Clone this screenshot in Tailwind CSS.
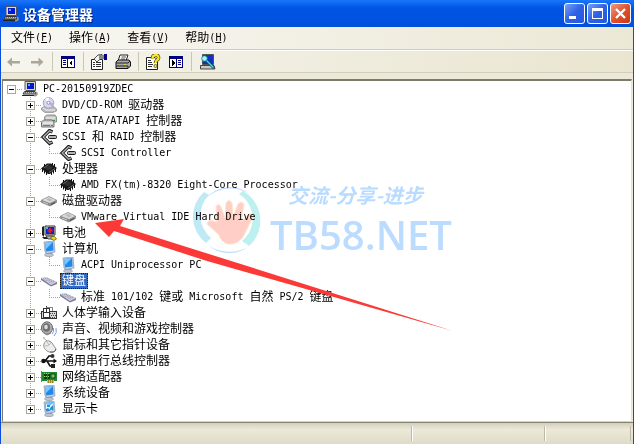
<!DOCTYPE html>
<html lang="zh-CN">
<head>
<meta charset="utf-8">
<title>设备管理器</title>
<script src="https://cdn.jsdelivr.net/npm/@tailwindcss/browser@4"></script>
</head>
<body class="bg-[#ece9d8]">
<svg class="hidden" aria-hidden="true">
  <symbol id="box-plus" viewBox="0 0 19 16" shape-rendering="crispEdges">
    <path d="M8.5 0V16M10 8.5H19" stroke="#a0a0a0" stroke-dasharray="1 1" fill="none"/>
    <rect x="4.500" y="4.500" width="8" height="8" fill="#fff" stroke="#aca899"/>
    <path d="M6 8.500H11M8.500 6V11" stroke="#000"/>
  </symbol>
  <symbol id="box-minus" viewBox="0 0 19 16" shape-rendering="crispEdges">
    <path d="M8.500 0V16M10 8.500H19" stroke="#a0a0a0" stroke-dasharray="1 1" fill="none"/>
    <rect x="4.500" y="4.500" width="8" height="8" fill="#fff" stroke="#aca899"/>
    <path d="M6 8.500H11" stroke="#000"/>
  </symbol>
  <symbol id="box-root" viewBox="0 0 19 16" shape-rendering="crispEdges">
    <path d="M14 8.500H19" stroke="#a0a0a0" stroke-dasharray="1 1" fill="none"/>
    <rect x="4.500" y="4.500" width="8" height="8" fill="#fff" stroke="#aca899"/>
    <path d="M6 8.500H11" stroke="#000"/>
  </symbol>
  <symbol id="box-last" viewBox="0 0 19 16" shape-rendering="crispEdges">
    <path d="M8.500 0V8M14 8.500H19" stroke="#a0a0a0" stroke-dasharray="1 1" fill="none"/>
    <rect x="4.500" y="4.500" width="8" height="8" fill="#fff" stroke="#aca899"/>
    <path d="M6 8.500H11M8.500 6V11" stroke="#000"/>
  </symbol>
  <symbol id="line" viewBox="0 0 19 16" shape-rendering="crispEdges">
    <path d="M8.500 0V16" stroke="#a0a0a0" stroke-dasharray="1 1"/>
  </symbol>
  <symbol id="corner" viewBox="0 0 19 16" shape-rendering="crispEdges">
    <path d="M8.500 0V8M8 8.500H19" stroke="#a0a0a0" stroke-dasharray="1 1" fill="none"/>
  </symbol>

  <symbol id="pc" viewBox="0 0 16 16">
    <path d="M3 .500H13.500V9.500H4L3 8.500Z" fill="#dcdad0" stroke="#555" stroke-width="1"/>
    <rect x="5" y="2" width="7" height="6" fill="#0018d8"/><path d="M6 3H8V5H6Z" fill="#5aa0ff"/>
    <path d="M2.500 10.500H13L14 13H1Z" fill="#c8c8c8" stroke="#333"/><path d="M3 11.500H13" stroke="#666" stroke-dasharray="1 1"/>
    <path d="M0 14.500H12" stroke="#222"/><path d="M12 14.500C15 15 16 13 14 11" stroke="#999" stroke-width="1.600" fill="none"/>
  </symbol>
  <symbol id="cd" viewBox="0 0 16 16">
    <path d="M.500 11L4 9H12L15.500 12V14L12 15.500H4L.500 13Z" fill="#b9b9bd" stroke="#8a8a90" stroke-width=".7"/>
    <path d="M2 11L5 13H14" stroke="#f3f3f3" fill="none"/>
    <circle cx="7.500" cy="5.800" r="5.300" fill="#d9d9ee" stroke="#9494ac" stroke-width=".8"/>
    <path d="M7.500 5.800L4 2A5 5 0 0 1 8 .800Z" fill="#fff"/><path d="M7.500 5.800L11 10A5 5 0 0 0 12.500 6Z" fill="#b6aee6"/>
    <circle cx="7.500" cy="5.800" r="1.500" fill="#fff" stroke="#7c7cc0" stroke-width=".8"/>
  </symbol>
  <symbol id="ide" viewBox="0 0 16 16">
    <path d="M3.500 4L5.500 2H14L15.500 4V9H4Z" fill="#c4c4c4" stroke="#777" stroke-width=".8"/><path d="M5 5H14" stroke="#f6f6f6"/>
    <path d="M.500 9L2.500 7H11L13 9V14H.500Z" fill="#c8c8c8" stroke="#6a6a6a" stroke-width=".9"/><path d="M2 10H12" stroke="#fff"/><path d="M2 12.500H9" stroke="#777"/><path d="M10 12H12V13H10ZM12 7H14V8H12Z" fill="#18b020"/>
  </symbol>
  <symbol id="scsi" viewBox="0 0 16 16">
    <path d="M11.500 3L8.500 1.500L2 8L8.500 14.500L11.500 13" fill="none" stroke="#1a1a1a" stroke-width="3.200"/>
    <path d="M11 2.800L8.500 1.700L2.200 8L8.500 14.300L11 13.200" fill="none" stroke="#b4b4b4" stroke-width="1.300"/>
    <rect x="7.500" y="6.500" width="8" height="3" rx="1" fill="#b4b4b4" stroke="#1a1a1a"/>
  </symbol>
  <symbol id="cpu" viewBox="0 0 16 16">
    <path d="M0 7.500L6 2.500H10L16 7L9 13H7Z" fill="#1a1a1a"/>
    <path d="M1.500 7V11M3.500 9V12.500M5.500 10V14M10.500 10V14M12.500 9V12.500M14.500 7V11M3.500 3V6M11.500 2V4M13.500 3V6" stroke="#111" stroke-width="1"/>
    <path d="M4 7L8 4L12 6.500L8 9.500Z" fill="#303030"/><path d="M3 7L7.500 3.700M8 11.500L14 7.500" stroke="#8a8a8a" stroke-width=".7"/>
  </symbol>
  <symbol id="disk" viewBox="0 0 16 16">
    <path d="M.500 7L8 3.500L15.500 7V9.500L9 13L.500 9.500Z" fill="#8c8c8c" stroke="#777" stroke-width=".6"/>
    <path d="M1 7L8 4L15 7L9 10Z" fill="#dedede"/><path d="M5 6.500L8 5L12 7L9 8.500Z" fill="#bcbcbc"/><path d="M10 11.500L14 9.500" stroke="#444"/><path d="M2 9L7 11" stroke="#ccc"/>
  </symbol>
  <symbol id="battery" viewBox="0 0 16 16">
    <path d="M1 2L3 1V12L1 10ZM1 12H10V14H3Z" fill="#222"/>
    <path d="M4 1H14V10H4Z" fill="#d8d8d8" stroke="#333"/><rect x="5" y="2" width="8" height="7" fill="#1020d0"/>
    <path d="M8 3H10V8H8ZM6.500 4.500H11.500V6.500H6.500Z" fill="#e02020"/><path d="M5 2H7V4H5Z" fill="#40c0f0"/>
    <path d="M5 11H12L14 14H7Z" fill="#b8b8b8" stroke="#333" stroke-width=".8"/>
    <path d="M10 12L13 11L15.500 14L13 15.500L10 14Z" fill="#e8d820" stroke="#554c00" stroke-width=".7"/>
  </symbol>
  <symbol id="monitor" viewBox="0 0 16 16">
    <path d="M5 10L11 11L12 14L9 15.800L4 14.500Z" fill="#a8acb8"/><ellipse cx="8" cy="14" rx="4.500" ry="1.700" fill="#c2c4cc" stroke="#888c98" stroke-width=".5"/>
    <path d="M3 1L13 0L14 11L6 12.500L4 11Z" fill="#c3d3e8" stroke="#7189ad" stroke-width=".6"/>
    <path d="M4 2L12 1L12.500 9.500L5 10.500Z" fill="#2588e8"/><path d="M4 2L12 1L5 8Z" fill="#79c7fb"/>
  </symbol>
  <symbol id="display" viewBox="0 0 16 16">
    <use href="#monitor"/><path d="M5 3L8 5L12 2V4L9 7L12 9L10 10L7 7L5 8Z" fill="#eef8ff"/><path d="M6 4H9V6H6ZM9 7H12V9H9Z" fill="#15a1c7"/>
  </symbol>
  <symbol id="keyboard" viewBox="0 0 16 16">
    <path d="M0 5L5 4.500L16 9V11L10 13.500L0 7Z" fill="#7c7c98"/><path d="M0 5L5 4L16 9L10 12Z" fill="#d6d6e6"/>
    <path d="M2 5.500L11 10.500M4 5L12.500 9.700M6 5L14 9" stroke="#8484a4" stroke-dasharray="1 .700" stroke-width=".9"/>
  </symbol>
  <symbol id="hid" viewBox="0 0 16 16" shape-rendering="crispEdges">
    <rect x=".500" y="6.500" width="15" height="7" fill="#d8d8d8" stroke="#333"/>
    <path d="M9 8.500H15M10 10.500H15M9 12.500H15" stroke="#444" stroke-dasharray="1 1"/>
    <rect x="2.500" y="3.500" width="6" height="9" fill="#fff" stroke="#333"/><path d="M5.500 1V7M3 7.500H8" stroke="#333"/><path d="M5 2.500H11V6" stroke="#888" fill="none"/>
  </symbol>
  <symbol id="sound" viewBox="0 0 16 16">
    <ellipse cx="6" cy="7" rx="5.500" ry="6.200" fill="#aeaeae" stroke="#686868"/><ellipse cx="5.500" cy="6.500" rx="3.600" ry="4.300" fill="#707070"/><ellipse cx="5" cy="6" rx="1.800" ry="2.200" fill="#ddd"/><path d="M2 11L6 14L10 12" stroke="#888" fill="none"/>
    <path d="M11 13Q13.500 11 12.500 7M13 15Q16.500 12 15 7" stroke="#8193ef" fill="none"/>
  </symbol>
  <symbol id="mouse" viewBox="0 0 16 16">
    <path d="M3 0C2 3 6 2 6 5" fill="none" stroke="#999"/>
    <path d="M3 7C4 3 9 3 11 6L15 12C15 15 10 16 7 14.500C4 13 2 10 3 7Z" fill="#ededeb" stroke="#858585" stroke-width=".9"/>
    <path d="M4 9C7 9 9 8 10 5M6 5L8 8" stroke="#aaa" fill="none" stroke-width=".8"/><path d="M9 15C13 15.500 15 14 14.500 12" stroke="#555" fill="none"/>
  </symbol>
  <symbol id="usb" viewBox="0 0 16 16">
    <path d="M1 8H14M4 8L8 3H11M6 8L9 13H12" fill="none" stroke="#111" stroke-width="1.600"/>
    <circle cx="2.500" cy="8" r="2.300" fill="#111"/><circle cx="11.500" cy="3" r="2" fill="#333"/><rect x="10" y="11" width="4" height="4" fill="#222"/><path d="M12.500 5.500L16 8L12.500 10.500Z" fill="#111"/>
  </symbol>
  <symbol id="nic" viewBox="0 0 16 16">
    <path d="M1 3H16V12H1Z" fill="#20882a"/><path d="M.500 2V13" stroke="#777"/>
    <path d="M3 5H6V7H3ZM3 8H6V10H3ZM7 5H9V10H7Z" fill="#07420d"/><path d="M3 4.500H8M3 7.500H8" stroke="#8fd784" stroke-dasharray="1 1"/><path d="M10 5H14V9H10Z" fill="#83bd75" stroke="#064b10"/><path d="M6 11H13V14H6Z" fill="#d4bf37"/><path d="M7.500 11V14M9.500 11V14M11.500 11V14" stroke="#6f6315" stroke-width=".6"/>
  </symbol>
</svg>

<main class="relative flex min-h-screen flex-col border-x border-[#0a4fdc] bg-[#ece9d8] font-['DejaVu_Sans_Mono','Noto_Sans_CJK_SC',monospace] text-[10px] leading-4 text-black">
  <header class="-mx-px flex h-[27px] shrink-0 items-center bg-linear-to-b from-[#1a76fa] via-[#0055e5] via-30% to-[#0150dc] px-[3px]">
    <svg class="size-4" aria-hidden="true"><use href="#pc"/></svg>
    <h1 class="ml-1 flex-1 font-['Noto_Sans_CJK_SC',sans-serif] text-sm font-bold text-white [text-shadow:1px_1px_#0a2a80]">设备管理器</h1>
    <div class="flex gap-[2px]">
      <button aria-label="最小化" class="size-[21px] rounded-[3px] border border-white bg-linear-to-br from-[#7aa0f4] via-[#2f61e6] to-[#2458e0]"><svg viewBox="0 0 19 19"><path d="M4 12H11V15H4Z" fill="#fff"/></svg></button>
      <button aria-label="最大化" class="size-[21px] rounded-[3px] border border-white bg-linear-to-br from-[#7aa0f4] via-[#2f61e6] to-[#2458e0]"><svg viewBox="0 0 19 19"><path d="M4 4H15V15H4ZM5 7V14H14V7Z" fill="#fff" fill-rule="evenodd"/></svg></button>
      <button aria-label="关闭" class="size-[21px] rounded-[3px] border border-white bg-linear-to-br from-[#ee9a80] via-[#e2512c] to-[#c93a12]"><svg viewBox="0 0 19 19"><path d="M5 5L14 14M14 5L5 14" stroke="#fff" stroke-width="2.400"/></svg></button>
    </div>
  </header>

  <nav class="flex h-[23px] shrink-0 items-center border-b border-[#d0cdbb] bg-linear-to-r from-[#f8f7f2] to-[#ece8d6] pl-[2px]">
    <button class="flex px-2"><span class="text-xs leading-4">文件</span>(<u>F</u>)</button>
    <button class="flex px-2"><span class="text-xs leading-4">操作</span>(<u>A</u>)</button>
    <button class="flex px-2"><span class="text-xs leading-4">查看</span>(<u>V</u>)</button>
    <button class="flex px-2"><span class="text-xs leading-4">帮助</span>(<u>H</u>)</button>
  </nav>

  <div role="toolbar" class="flex h-[23px] shrink-0 items-center border-t border-b border-t-white border-b-[#d0cdbb] bg-linear-to-r from-[#f6f5ee] to-[#e9e5d0]">
    <div class="flex h-[19px] w-[52px] items-center gap-[7px] border-r border-[#c9c6b4] pl-[5px]">
      <button aria-label="后退" class="size-4"><svg viewBox="0 0 16 16"><path d="M1 8L6 3.500V7H14V9.500H6V12.500Z" fill="#aca899"/></svg></button>
      <button aria-label="前进" class="size-4"><svg viewBox="0 0 16 16"><path d="M14.500 8L9.500 3.500V7H2V9.500H9.500V12.500Z" fill="#aca899"/></svg></button>
    </div>
    <div class="flex h-[19px] w-[31px] items-center justify-center border-r border-[#c9c6b4]">
      <button aria-label="显示树" class="size-4"><svg viewBox="0 0 16 16" shape-rendering="crispEdges"><path d="M1 2H15V14H1Z" fill="#000080"/><path d="M2 5H7V13H2ZM8 5H14V13H8Z" fill="#fff"/><path d="M3 6.500H6M3 8.500H6M3 10.500H6" stroke="#000080"/><path d="M12 6V12L9 9Z" fill="#000"/></svg></button>
    </div>
    <div class="flex h-[19px] w-[55px] items-center gap-2 border-r border-[#c9c6b4] pl-[7px]">
      <button aria-label="属性" class="size-4"><svg viewBox="0 0 16 16"><path d="M.500 5.500H11.500V15.500H.500Z" fill="#fff" stroke="#222"/><path d="M2 8.500H4M5 8.500H10M2 10.500H4M5 10.500H10M2 12.500H4M5 12.500H10" stroke="#333"/><path d="M3 5L7 1L11 .500V5L8 6L6 8Z" fill="#f5f5f5" stroke="#222" stroke-width=".8"/><path d="M8 1H13V5H8Z" fill="#888"/><path d="M13 0H16V6H13Z" fill="#000080"/></svg></button>
      <button aria-label="打印" class="size-4"><svg viewBox="0 0 16 16"><path d="M5 1H13L11 7H3Z" fill="#fff" stroke="#222"/><path d="M6.500 3H11M6 5H10" stroke="#555"/><path d="M1 8L3 6H14L15.500 8V12L13 14.500H1Z" fill="#aaa" stroke="#111"/><path d="M1 9H13L15 7M1 12H13V14" stroke="#222" fill="none"/><path d="M9 10H11V11H9Z" fill="#e5d820"/></svg></button>
    </div>
    <div class="flex h-[19px] w-[53px] items-center gap-[7px] border-r border-[#c9c6b4] pl-[6px]">
      <button aria-label="帮助主题" class="size-4"><svg viewBox="0 0 16 16"><path d="M1.500 3.500H10L12.500 6V15.500H1.500Z" fill="#fff" stroke="#222"/><path d="M3 6.500H6M3 8.500H7M3 10.500H8M3 12.500H7" stroke="#333"/><path d="M7.500 4.500C7.500 0 14 0 13.500 4C13 6.500 10.500 6 10.500 9" stroke="#443c00" stroke-width="3.600" fill="none"/><path d="M7.500 4.500C7.500 0 14 0 13.500 4C13 6.500 10.500 6 10.500 9" stroke="#ffed20" stroke-width="2.200" fill="none"/><circle cx="10.500" cy="12" r="1.600" fill="#ffed20" stroke="#443c00" stroke-width=".7"/></svg></button>
      <button aria-label="显示操作" class="size-4"><svg viewBox="0 0 16 16" shape-rendering="crispEdges"><path d="M1 2H15V14H1Z" fill="#000080"/><path d="M2 5H8V13H2ZM9 5H14V13H9Z" fill="#fff"/><path d="M10 6.500H13M10 8.500H13M10 10.500H13" stroke="#000080"/><path d="M4 6V12L7 9Z" fill="#000"/></svg></button>
    </div>
    <button aria-label="扫描检测硬件改动" class="ml-2 size-4"><svg viewBox="0 0 16 16"><path d="M2.500 .500H13.500V10.500H2.500Z" fill="#1030c8" stroke="#555"/><path d="M.500 11.500H14L15 15H.500Z" fill="#c8c8c8" stroke="#222" stroke-width=".8"/><circle cx="4.500" cy="4.500" r="2.800" fill="#a8f0f8" stroke="#077" stroke-width=".8"/><path d="M6.500 6.500L14 14" stroke="#045" stroke-width="2.800"/><path d="M6.500 6.500L13.500 13.500" stroke="#48d8f0" stroke-width="1.400"/></svg></button>
  </div>

  <section class="mx-px mt-[6px] flex-1 border-t-2 border-r border-b border-l border-[#7d7a6c] border-r-[#e6e3d4] border-b-[#d8d5c6] bg-white pb-1">
    <ul role="tree" aria-label="设备" class="[&_span]:whitespace-pre">
      <li class="flex h-4"><button aria-label="折叠" class="w-[19px]"><svg class="h-4 w-[19px]"><use href="#box-root"/></svg></button><svg class="size-4"><use href="#pc"/></svg><span class="ml-[3px] px-[2px]">PC-20150919ZDEC</span></li>
      <li class="flex h-4 pl-[19px]"><button aria-label="展开" class="w-[19px]"><svg class="h-4 w-[19px]"><use href="#box-plus"/></svg></button><svg class="size-4"><use href="#cd"/></svg><span class="ml-[3px] flex px-[2px]">DVD/CD-ROM <span class="text-xs leading-4">驱动器</span></span></li>
      <li class="flex h-4 pl-[19px]"><button aria-label="展开" class="w-[19px]"><svg class="h-4 w-[19px]"><use href="#box-plus"/></svg></button><svg class="size-4"><use href="#ide"/></svg><span class="ml-[3px] flex px-[2px]">IDE ATA/ATAPI <span class="text-xs leading-4">控制器</span></span></li>
      <li class="flex h-4 pl-[19px]"><button aria-label="折叠" class="w-[19px]"><svg class="h-4 w-[19px]"><use href="#box-minus"/></svg></button><svg class="size-4"><use href="#scsi"/></svg><span class="ml-[3px] flex px-[2px]">SCSI <span class="text-xs leading-4">和</span> RAID <span class="text-xs leading-4">控制器</span></span></li>
      <li class="flex h-4 pl-[19px]"><svg class="h-4 w-[19px]"><use href="#line"/></svg><svg class="h-4 w-[19px]"><use href="#corner"/></svg><svg class="size-4"><use href="#scsi"/></svg><span class="ml-[3px] px-[2px]">SCSI Controller</span></li>
      <li class="flex h-4 pl-[19px]"><button aria-label="折叠" class="w-[19px]"><svg class="h-4 w-[19px]"><use href="#box-minus"/></svg></button><svg class="size-4"><use href="#cpu"/></svg><span class="ml-[3px] px-[2px] text-xs leading-4">处理器</span></li>
      <li class="flex h-4 pl-[19px]"><svg class="h-4 w-[19px]"><use href="#line"/></svg><svg class="h-4 w-[19px]"><use href="#corner"/></svg><svg class="size-4"><use href="#cpu"/></svg><span class="ml-[3px] px-[2px]">AMD FX(tm)-8320 Eight-Core Processor</span></li>
      <li class="flex h-4 pl-[19px]"><button aria-label="折叠" class="w-[19px]"><svg class="h-4 w-[19px]"><use href="#box-minus"/></svg></button><svg class="size-4"><use href="#disk"/></svg><span class="ml-[3px] px-[2px] text-xs leading-4">磁盘驱动器</span></li>
      <li class="flex h-4 pl-[19px]"><svg class="h-4 w-[19px]"><use href="#line"/></svg><svg class="h-4 w-[19px]"><use href="#corner"/></svg><svg class="size-4"><use href="#disk"/></svg><span class="ml-[3px] px-[2px]">VMware Virtual IDE Hard Drive</span></li>
      <li class="flex h-4 pl-[19px]"><button aria-label="展开" class="w-[19px]"><svg class="h-4 w-[19px]"><use href="#box-plus"/></svg></button><svg class="size-4"><use href="#battery"/></svg><span class="ml-[3px] px-[2px] text-xs leading-4">电池</span></li>
      <li class="flex h-4 pl-[19px]"><button aria-label="折叠" class="w-[19px]"><svg class="h-4 w-[19px]"><use href="#box-minus"/></svg></button><svg class="size-4"><use href="#monitor"/></svg><span class="ml-[3px] px-[2px] text-xs leading-4">计算机</span></li>
      <li class="flex h-4 pl-[19px]"><svg class="h-4 w-[19px]"><use href="#line"/></svg><svg class="h-4 w-[19px]"><use href="#corner"/></svg><svg class="size-4"><use href="#monitor"/></svg><span class="ml-[3px] px-[2px]">ACPI Uniprocessor PC</span></li>
      <li class="flex h-4 pl-[19px]"><button aria-label="折叠" class="w-[19px]"><svg class="h-4 w-[19px]"><use href="#box-minus"/></svg></button><svg class="size-4"><use href="#keyboard"/></svg><span class="ml-[3px] bg-[#316ac5] px-[2px] text-xs leading-4 text-white outline-1 -outline-offset-1 outline-dotted outline-[#2a1c00]">键盘</span></li>
      <li class="flex h-4 pl-[19px]"><svg class="h-4 w-[19px]"><use href="#line"/></svg><svg class="h-4 w-[19px]"><use href="#corner"/></svg><svg class="size-4"><use href="#keyboard"/></svg><span class="ml-[3px] flex px-[2px]"><span class="text-xs leading-4">标准</span> 101/102 <span class="text-xs leading-4">键或</span> Microsoft <span class="text-xs leading-4">自然</span> PS/2 <span class="text-xs leading-4">键盘</span></span></li>
      <li class="flex h-4 pl-[19px]"><button aria-label="展开" class="w-[19px]"><svg class="h-4 w-[19px]"><use href="#box-plus"/></svg></button><svg class="size-4"><use href="#hid"/></svg><span class="ml-[3px] px-[2px] text-xs leading-4">人体学输入设备</span></li>
      <li class="flex h-4 pl-[19px]"><button aria-label="展开" class="w-[19px]"><svg class="h-4 w-[19px]"><use href="#box-plus"/></svg></button><svg class="size-4"><use href="#sound"/></svg><span class="ml-[3px] px-[2px] text-xs leading-4">声音、视频和游戏控制器</span></li>
      <li class="flex h-4 pl-[19px]"><button aria-label="展开" class="w-[19px]"><svg class="h-4 w-[19px]"><use href="#box-plus"/></svg></button><svg class="size-4"><use href="#mouse"/></svg><span class="ml-[3px] px-[2px] text-xs leading-4">鼠标和其它指针设备</span></li>
      <li class="flex h-4 pl-[19px]"><button aria-label="展开" class="w-[19px]"><svg class="h-4 w-[19px]"><use href="#box-plus"/></svg></button><svg class="size-4"><use href="#usb"/></svg><span class="ml-[3px] px-[2px] text-xs leading-4">通用串行总线控制器</span></li>
      <li class="flex h-4 pl-[19px]"><button aria-label="展开" class="w-[19px]"><svg class="h-4 w-[19px]"><use href="#box-plus"/></svg></button><svg class="size-4"><use href="#nic"/></svg><span class="ml-[3px] px-[2px] text-xs leading-4">网络适配器</span></li>
      <li class="flex h-4 pl-[19px]"><button aria-label="展开" class="w-[19px]"><svg class="h-4 w-[19px]"><use href="#box-plus"/></svg></button><svg class="size-4"><use href="#monitor"/></svg><span class="ml-[3px] px-[2px] text-xs leading-4">系统设备</span></li>
      <li class="flex h-4 pl-[19px]"><button aria-label="展开" class="w-[19px]"><svg class="h-4 w-[19px]"><use href="#box-last"/></svg></button><svg class="size-4"><use href="#display"/></svg><span class="ml-[3px] px-[2px] text-xs leading-4">显示卡</span></li>
    </ul>
  </section>

  <footer class="flex h-[22px] shrink-0 border-t border-[#86836f] bg-linear-to-b from-[#d2cfbe] via-[#ece9d8] via-30% to-[#dedbc8] py-[3px] pr-[2px]">
    <div class="flex-1 border-r border-[#bdb9a5]"></div>
    <div class="w-[133px] border-r border-l border-r-[#bdb9a5] border-l-white"></div>
    <div class="w-[86px] border-r border-l border-r-[#bdb9a5] border-l-white"></div>
  </footer>

  <svg class="pointer-events-none absolute top-0 -left-px h-[444px] w-[634px]" viewBox="0 0 634 444" aria-hidden="true">
    <g class="mix-blend-multiply">
      <path d="M204 192A33 33 0 0 0 206 243L211 238A29 29 0 0 1 209 195Z" fill="#bfe9f5"/>
      <path d="M243 191A34 34 0 0 1 249 246L242 241A29 29 0 0 0 239 194Z" fill="#bdf0ef"/>
      <path d="M206 198A32 32 0 0 1 251 195A36 36 0 0 0 206 198ZM208 245A32 32 0 0 0 248 247A38 38 0 0 1 208 245Z" fill="#bcdcff"/>
      <path d="M217 222L216 207Q218 202 221 207L225 218L226 203Q229 198 232 203L233 217L238 204Q242 200 244 205L241 222L247 216Q252 211 253 217L243 237Q237 245 228 244Q221 242 219 235L207 224Q208 219 213 221Z" fill="#ffcfc7" stroke="#ffe4c9"/>
      <text x="288" y="203" class="font-['Noto_Sans_CJK_SC',sans-serif] text-[20px] font-bold italic" fill="#b9dbff">交流-分享-进步</text>
      <text x="270" y="250" class="font-['Open_Sans',sans-serif] text-[40px] font-semibold" fill="#bcdcff">TB58.NET</text>
    </g>
    <path d="M95 223L124 219L120 226L228 260L453 331L207 261L114 231L109 237Z" fill="#fb3a38"/>
  </svg>
</main>
</body>
</html>
